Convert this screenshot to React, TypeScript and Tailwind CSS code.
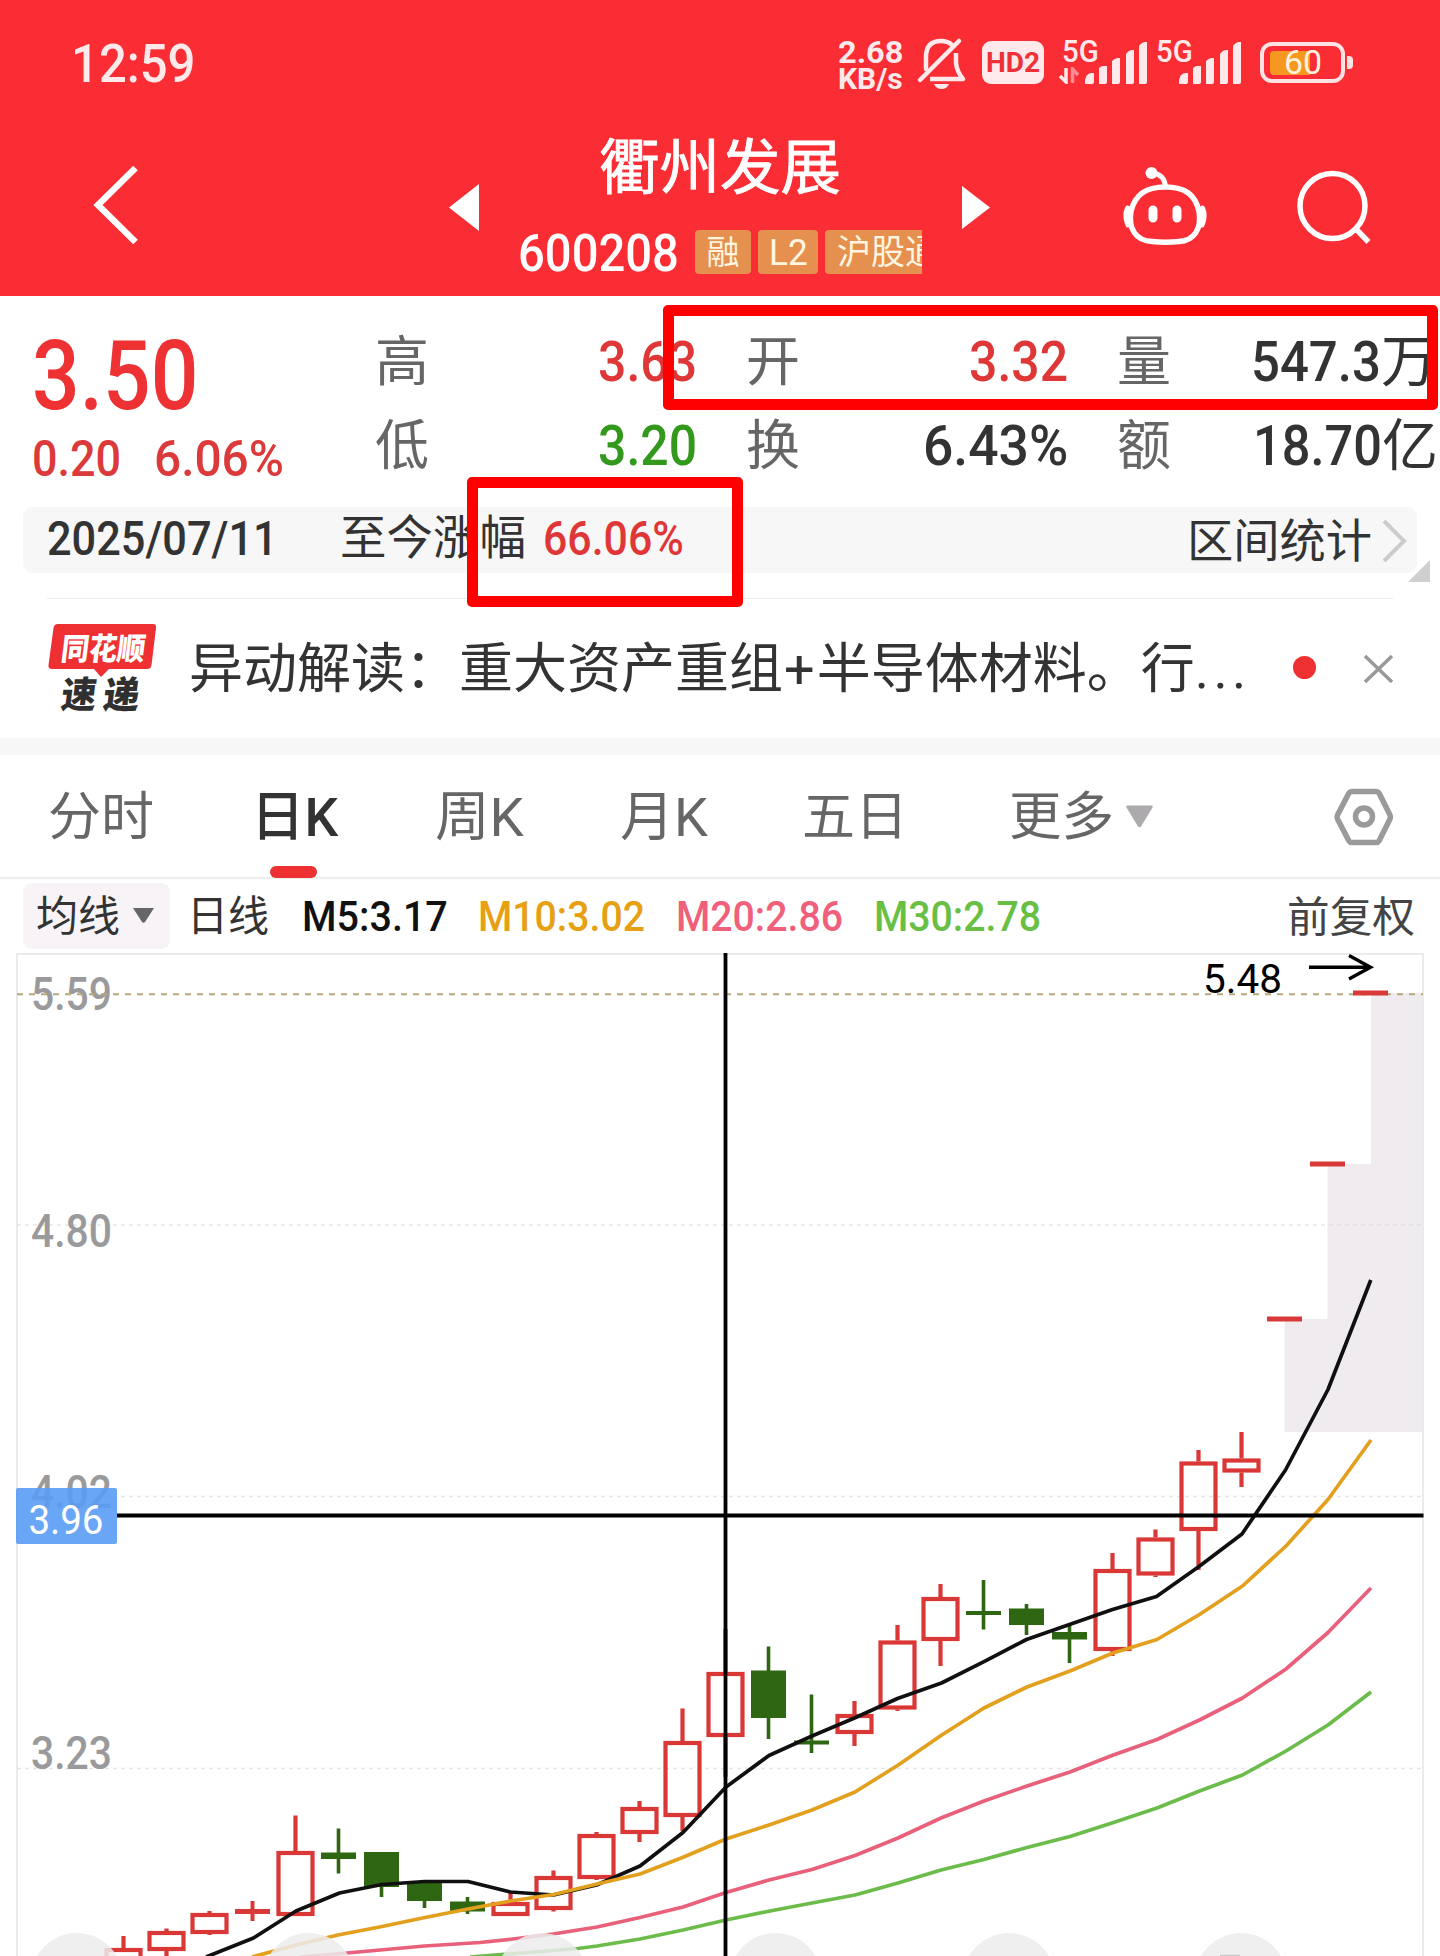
import { useLayoutEffect, useRef } from "react";

const FONT = "font-['Roboto','Noto_Sans_CJK_SC',sans-serif]";

/** Text condensed or stretched horizontally so that it fills its box. */
function Fit({ children, className }: { children: string; className: string }) {
  const outer = useRef<HTMLSpanElement>(null);
  const inner = useRef<HTMLSpanElement>(null);
  useLayoutEffect(() => {
    if (outer.current && inner.current) {
      const ratio = outer.current.clientWidth / inner.current.offsetWidth;
      inner.current.style.transform = `scaleX(${ratio})`;
    }
  }, [children]);
  return (
    <span ref={outer} className={`block shrink-0 leading-none ${className}`}>
      <span ref={inner} className="inline-block origin-left align-top whitespace-nowrap">
        {children}
      </span>
    </span>
  );
}

function Signal() {
  return (
    <svg className="block h-[43px] w-[63px]" viewBox="0 0 63 43" fill="#ffe9ea">
      <path d="M0 43V39Q1 33 6 32H9V41Q9 43 7 43Z" />
      <path d="M14 43V27L17 25H22V41Q22 43 20 43Z" />
      <path d="M27 43V20Q30 17 33 17H35V41Q35 43 33 43Z" />
      <path d="M41 43V13Q44 9 47 9H49V41Q49 43 47 43Z" />
      <path d="M54 43V5Q57 1 60 1H62V41Q62 43 60 43Z" />
    </svg>
  );
}

function StatusBar() {
  return (
    <div className="flex h-[104px] items-start text-[#ffe9ea]">
      <Fit className="mt-[38px] ml-[71px] w-[124px] text-[53px] font-medium">12:59</Fit>
      <div className="mt-[36px] ml-[643px] flex w-[65px] flex-col">
        <Fit className="h-[28px] w-[65px] text-[32px] font-bold">2.68</Fit>
        <Fit className="w-[65px] text-[30px] font-bold">KB/s</Fit>
      </div>
      <svg className="mt-[36px] ml-[13px] h-[54px] w-[52px]" viewBox="916 36 52 54" fill="none" stroke="#ffe9ea" strokeWidth="4.5">
        <path d="M926 69V57Q926 41 941 41Q948 41 952 45" strokeLinecap="round" />
        <path d="M956 53V63Q957 72 963 79H930" strokeLinejoin="round" />
        <path d="M920 80L959 41" strokeLinecap="round" />
        <path d="M934 84H949Q947 89 941.500 89Q936 89 934 84Z" fill="#ffe9ea" stroke="none" />
      </svg>
      <div className="mt-[41px] ml-[14px] flex h-[43px] w-[62px] justify-center rounded-[9px] bg-[#ffe9ea] text-[#ee3038]">
        <Fit className="mt-[8px] w-[54px] text-[28px] font-bold">HD2</Fit>
      </div>
      <div className="ml-[15px] flex h-[90px]">
        <div className="mt-[36px] w-[26px]">
          <Fit className="ml-[3px] w-[37px] text-[31px] font-medium">5G</Fit>
          <svg className="block h-[17px] w-[22px]" viewBox="0 0 22 17" fill="none" strokeWidth="3.500">
            <path d="M7 1V15L1 9" stroke="#ffe9ea" />
            <path d="M13.500 16V2L19 8" stroke="#fd8d92" />
          </svg>
        </div>
        <div className="mt-[41px]">
          <Signal />
        </div>
      </div>
      <div className="ml-[8px] flex h-[90px]">
        <Fit className="mt-[36px] w-[37px] text-[31px] font-medium">5G</Fit>
        <div className="mt-[41px] -ml-[14px]">
          <Signal />
        </div>
      </div>
      <div className="mt-[42px] ml-[18px] flex items-center gap-[2px]">
        <div className="relative flex h-[41px] w-[85px] justify-center rounded-[12px] border-4 border-[#ffe3e4]">
          <div className="absolute top-[5px] left-[6px] h-[24px] w-[40px] rounded-l-[4px] bg-[#f6971f]" />
          <Fit className="relative w-[38px] text-[33px] text-[#fff3dc]">60</Fit>
        </div>
        <div className="h-[13px] w-[6px] rounded-r-[4px] bg-[#ffe3e4]" />
      </div>
    </div>
  );
}

function TitleBar() {
  return (
    <div className="flex h-[192px] items-start">
      <svg className="mt-[58px] ml-[90px] h-[86px] w-[52px]" viewBox="90 162 52 86" fill="none" stroke="#fff" strokeWidth="6.500">
        <path d="M135.500 168L98 205L135.500 242" />
      </svg>
      <svg className="mt-[80px] ml-[307px] h-[47px] w-[30px]" viewBox="0 0 30 47" fill="#fff">
        <path d="M0 23.500L30 0V47Z" />
      </svg>
      <div className="ml-[39px] w-[405px]">
        <Fit className="mt-[35px] ml-[81px] w-[242px] text-[60px] text-white [-webkit-text-stroke:0.8px_white]">衢州发展</Fit>
        <div className="mt-[31px] flex h-[44px] overflow-hidden">
          <Fit className="-mt-[2px] w-[161px] text-[51px] font-medium text-white">600208</Fit>
          <div className="ml-[16px] flex gap-[7px] text-[33px] leading-[45px] text-[#fff5e0]">
            <div className="h-[44px] w-[56px] rounded-[4px] bg-[#e5904e] text-center">融</div>
            <div className="flex h-[44px] w-[60px] justify-center rounded-[4px] bg-[#e5904e]">
              <Fit className="mt-[4px] w-[39px] text-[37px]">L2</Fit>
            </div>
            <div className="w-[97px] overflow-hidden rounded-l-[4px] bg-[#e5904e] pl-[12px] text-[34px] whitespace-nowrap">沪股通</div>
          </div>
        </div>
      </div>
      <svg className="mt-[82px] ml-[39px] h-[43px] w-[28px]" viewBox="0 0 28 43" fill="#fff">
        <path d="M0 0L28 21.500L0 43Z" />
      </svg>
      <svg className="mt-[60px] ml-[130px] h-[84px] w-[92px]" viewBox="1120 164 92 84" fill="none" stroke="#fff" strokeWidth="5.500">
        <circle cx="1151.500" cy="173" r="6" fill="#fff" stroke="none" />
        <path d="M1152 173Q1164 174 1165.500 186" strokeWidth="5" />
        <path d="M1165 187C1186 187 1195 195 1199 211C1202 229 1194 241 1179 241.500Q1165 243 1152 241.500C1136 241 1128 229 1131 211C1135 195 1145 187 1165 187Z" />
        <path d="M1127.500 208Q1124 216 1128 225M1202.500 208Q1206 216 1202 225" strokeWidth="5" strokeLinecap="round" />
        <path d="M1153 210V218M1177 210V218" strokeWidth="9" strokeLinecap="round" />
      </svg>
      <svg className="mt-[60px] ml-[80px] h-[84px] w-[84px]" viewBox="1292 164 84 84" fill="none" stroke="#fff" strokeWidth="5.500">
        <ellipse cx="1332.500" cy="206" rx="32.500" ry="32.500" />
        <path d="M1355 228L1368.500 242" />
      </svg>
    </div>
  );
}

function Label({ children }: { children: string }) {
  return <span className="pl-px text-[54px] leading-[58px] text-[#666]">{children}</span>;
}

function Quote() {
  return (
    <div className="flex h-[211px] items-start text-[56px] text-[#333]">
      <div className="mt-[32px] ml-[32px] w-[342px]">
        <Fit className="w-[166px] text-[96px] font-medium text-[#ee3133]">3.50</Fit>
        <div className="mt-[10px] flex text-[50px] font-medium text-[#dc3a3a]">
          <Fit className="w-[89px]">0.20</Fit>
          <Fit className="ml-[33px] w-[130px]">6.06%</Fit>
        </div>
      </div>
      <div className="mt-[38px] grid auto-rows-[56px] grid-cols-[323px_323px_324px] gap-x-[48px] gap-y-[28px]">
        <div className="flex justify-between">
          <Label>高</Label>
          <Fit className="w-[99px] font-medium text-[#df3737]">3.63</Fit>
        </div>
        <div className="flex justify-between">
          <Label>开</Label>
          <Fit className="w-[99px] font-medium text-[#df3737]">3.32</Fit>
        </div>
        <div className="flex">
          <Label>量</Label>
          <Fit className="ml-[80px] w-[130px] font-medium">547.3</Fit>
          <span className="leading-[56px]">万</span>
        </div>
        <div className="flex justify-between">
          <Label>低</Label>
          <Fit className="w-[99px] font-medium text-[#33991d]">3.20</Fit>
        </div>
        <div className="flex justify-between">
          <Label>换</Label>
          <Fit className="w-[145px] font-medium">6.43%</Fit>
        </div>
        <div className="flex">
          <Label>额</Label>
          <Fit className="ml-[82px] w-[129px] font-medium">18.70</Fit>
          <span className="leading-[56px]">亿</span>
        </div>
      </div>
    </div>
  );
}

function RangeBar() {
  return (
    <div className="relative h-[92px]">
      <div className="mx-[23px] flex h-[66px] items-start rounded-[9px] bg-[#f7f7f7] text-[48px] text-[#333]">
        <Fit className="mt-[8px] ml-[24px] w-[231px] font-medium">2025/07/11</Fit>
        <Fit className="mt-[7px] ml-[62px] w-[186px] text-[47px]">至今涨幅</Fit>
        <Fit className="mt-[8px] ml-[17px] w-[141px] font-medium text-[#df3737]">66.06%</Fit>
        <Fit className="mt-[11px] ml-[503px] w-[185px] text-[46px]">区间统计</Fit>
        <svg className="mt-[10px] ml-[9px] h-[48px] w-[28px]" viewBox="0 0 28 48" fill="none" stroke="#cdcdcd" strokeWidth="4">
          <path d="M3 4L23 24L3 44" />
        </svg>
      </div>
      <svg className="absolute top-[53px] left-[1408px] h-[22px] w-[22px]" viewBox="0 0 22 22" fill="#cfcfcf">
        <path d="M22 0V22H0Z" />
      </svg>
      <div className="mx-[47px] mt-[25px] h-px bg-[#ececec]" />
    </div>
  );
}

function ExpressLogo() {
  return (
    <svg className="mt-[23px] ml-[46px] h-[92px] w-[112px]" viewBox="46 622 112 92">
      <path d="M58 624H153Q156.500 624 156 628L151.500 665Q151 669 147 669H109L101 677L94 669H52Q48 669 48.500 665L53.500 628Q54 624 58 624Z" fill="#ee3032" />
      <g transform="translate(0 660) skewX(-7)" className={FONT} fontWeight="900">
        <text x="60" y="0" fontSize="31" fill="#fff" textLength="84" lengthAdjust="spacingAndGlyphs">同花顺</text>
        <text x="66" y="48.500" fontSize="37" fill="#303030" textLength="35" lengthAdjust="spacingAndGlyphs">速</text>
        <text x="108" y="48.500" fontSize="37" fill="#303030" textLength="36" lengthAdjust="spacingAndGlyphs">递</text>
      </g>
    </svg>
  );
}

function NewsRow() {
  return (
    <div className="flex h-[139px] items-start">
      <ExpressLogo />
      <div className="mt-[44px] ml-[31px] w-[1074px] text-[54px] leading-none whitespace-nowrap text-[#333]">
        异动解读：重大资产重组<span className="mr-[2px] ml-px">+</span>半导体材料。行<span className="tracking-[4.500px]">...</span>
      </div>
      <div className="mt-[57px] ml-[30px] size-[23px] rounded-full bg-[#ee3032]" />
      <svg className="mt-[55px] ml-[47px] h-[30px] w-[31px]" viewBox="0 0 31 30" fill="none" stroke="#999" strokeWidth="3.500">
        <path d="M2 2L29 28M29 2L2 28" />
      </svg>
    </div>
  );
}

function Tabs() {
  return (
    <div className="relative flex h-[124px] items-start border-b-2 border-[#eeeeee] text-[54px] text-[#666]">
      <Fit className="mt-[37px] ml-[48px] w-[106px] text-[52px]">分时</Fit>
      <Fit className="mt-[36px] ml-[97px] w-[87px] font-medium text-[#333]">日K</Fit>
      <Fit className="mt-[36px] ml-[97px] w-[89px]">周K</Fit>
      <Fit className="mt-[36px] ml-[96px] w-[88px]">月K</Fit>
      <Fit className="mt-[37px] ml-[94px] w-[106px] text-[52px]">五日</Fit>
      <Fit className="mt-[37px] ml-[101px] w-[105px] text-[52px]">更多</Fit>
      <svg className="mt-[50px] ml-[12px] h-[23px] w-[27px]" viewBox="0 0 27 22" fill="#acaaac">
        <path d="M1 0H26Q27 0 26.500 2L15 21Q13.500 22.500 12 21L0.500 2Q0 0 1 0Z" />
      </svg>
      <svg className="mt-[32px] ml-[179px] h-[60px] w-[64px]" viewBox="1332 787 64 60" fill="none" stroke="#9a9a9a" strokeWidth="5.500">
        <path d="M1352 791.500H1376Q1378 791.500 1379 793L1390 815Q1391 817 1390 819L1379 841Q1378 842.500 1376 842.500H1352Q1350 842.500 1349 841L1337.500 819Q1336.500 817 1337.500 815L1349 793Q1350 791.500 1352 791.500Z" />
        <circle cx="1364" cy="816.500" r="8.500" />
      </svg>
      <div className="absolute top-[111px] left-[270px] h-[12px] w-[47px] rounded-[6px] bg-[#ee3032]" />
    </div>
  );
}

function Indicators() {
  return (
    <div className="flex h-[71px] items-start text-[42.5px] font-medium">
      <div className="mt-[4px] ml-[23px] flex h-[66px] w-[147px] rounded-[9px] bg-[#f7f3f7] font-normal text-[#333]">
        <Fit className="mt-[13px] ml-[13px] w-[84px] text-[42px]">均线</Fit>
        <svg className="mt-[25px] ml-[12px] h-[15px] w-[23px]" viewBox="0 0 23 15" fill="#666">
          <path d="M1 0H22L13 14Q11.500 15.500 10 14Z" />
        </svg>
      </div>
      <Fit className="mt-[17px] ml-[17px] w-[82px] text-[42px] font-normal text-[#333]">日线</Fit>
      <Fit className="mt-[17px] ml-[33px] w-[146px] text-[#111]">M5:3.17</Fit>
      <Fit className="mt-[17px] ml-[30px] w-[167px] text-[#e6a012]">M10:3.02</Fit>
      <Fit className="mt-[17px] ml-[31px] w-[167px] text-[#f0607a]">M20:2.86</Fit>
      <Fit className="mt-[17px] ml-[31px] w-[167px] text-[#68bf43]">M30:2.78</Fit>
      <Fit className="mt-[18px] ml-[246px] w-[128px] text-[42px] font-normal text-[#444]">前复权</Fit>
    </div>
  );
}

type Candle = { x: number; high: number; low: number; top: number; bottom: number; up: boolean };

const STEP = 43;
const CENTER = 725.5;
const c = (k: number, high: number, low: number, top: number, bottom: number, up = true): Candle => ({
  x: CENTER + k * STEP, high, low, top, bottom, up,
});

const CANDLES: Candle[] = [
  c(-14, 1936, 1990, 1948, 1980),
  c(-13, 1928.5, 1970, 1931, 1951),
  c(-12, 1911, 1935, 1913, 1934),
  c(-11, 1901, 1921, 1909, 1914),
  c(-10, 1815.5, 1915, 1851, 1916),
  c(-9, 1828.5, 1873.5, 1852.5, 1859, false),
  c(-8, 1852, 1897, 1852, 1887, false),
  c(-7, 1882, 1908, 1882, 1901, false),
  c(-6, 1897, 1914, 1901.5, 1911.5, false),
  c(-5, 1893, 1915, 1902, 1916),
  c(-4, 1870.5, 1911.5, 1876, 1910),
  c(-3, 1832, 1880, 1834, 1879),
  c(-2, 1801, 1842, 1807, 1834),
  c(-1, 1708.5, 1831, 1741, 1817),
  c(0, 1629, 1777, 1672, 1737),
  c(1, 1646.5, 1739, 1670.5, 1718, false),
  c(2, 1694.5, 1753, 1740.5, 1744.5, false),
  c(3, 1701, 1746, 1714, 1734),
  c(4, 1625, 1711, 1640.5, 1709.5),
  c(5, 1584, 1666, 1597, 1641),
  c(6, 1580, 1629.5, 1611, 1615, false),
  c(7, 1604, 1635, 1608.5, 1625, false),
  c(8, 1625.5, 1663, 1632, 1639.5, false),
  c(9, 1553, 1656, 1569, 1651),
  c(10, 1529.5, 1577, 1537.5, 1575.5),
  c(11, 1450, 1570, 1461.5, 1531),
  c(12, 1432, 1487, 1458.5, 1472.5),
  c(13, 1319, 1319, 1316.5, 1321.5),
  c(14, 1164, 1164, 1161.5, 1166.5),
  c(15, 993, 993, 990.5, 995.5),
];

const MA5 = "206,1957 253.5,1938 296,1911 339.5,1893 382,1884.5 424.5,1881.5 468,1881.5 510.5,1892 553.5,1895 596.5,1885 640,1866 683,1832.5 726,1787 769,1755.5 812,1736 854.5,1718 897.5,1698.5 941.5,1683 984,1661.7 1026.5,1639.5 1069.5,1624.5 1112.5,1609.5 1156.5,1596.5 1199,1566.5 1242,1534 1285.5,1470 1328,1389.5 1370.8,1280";
const MA10 = "252,1957 296,1945 338,1935 382,1926.5 425,1917.5 468,1909 510.5,1901 553.5,1894.5 597,1884 640,1874 682.5,1857.5 726,1839 769,1825 812,1810 855,1792 897.5,1765.5 941,1735.5 984,1708 1027,1687 1070,1671 1113,1653 1157,1639.5 1199.5,1614.5 1242.5,1586 1286,1546 1328,1499.5 1371,1440";
const MA20 = "300,1957 347,1953 424.5,1946 480,1942.5 513,1939 553,1934 597,1927 640,1917.5 683,1907 726,1892.5 769,1880 812,1869.5 855,1855.5 898,1838 941,1818 984,1801 1027,1786 1070,1772 1112,1755.5 1157,1739.5 1199.5,1720 1242.5,1698 1286,1669 1328,1632.5 1371,1588";
const MA30 = "470,1957 521,1953 578,1948.5 597,1946 640,1939 683,1930 726,1920 770,1911 812,1903 855,1895 898,1883 941,1870 984,1859.5 1027,1847.5 1070,1836.5 1112,1823 1157,1808 1199.5,1791 1242.5,1775 1286,1751 1328,1725 1371,1692";

function CandleMark({ d }: { d: Candle }) {
  const flat = d.bottom - d.top < 7;
  if (!d.up || flat) {
    const color = d.up ? "#d83a39" : "#2f6612";
    return (
      <g fill={color}>
        <rect x={d.x - (d.up ? 2 : 1.8)} y={d.high} width={d.up ? 4 : 3.6} height={d.low - d.high} />
        <rect x={d.x - 17.5} y={d.top} width="35" height={d.bottom - d.top} />
      </g>
    );
  }
  return (
    <g stroke="#da3737" strokeWidth="4.200" fill="none">
      <path d={`M${d.x} ${d.high}V${d.top}M${d.x} ${d.bottom}V${d.low}`} />
      <rect x={d.x - 17} y={d.top + 2} width="34" height={d.bottom - d.top - 4} />
    </g>
  );
}

function Chart() {
  const axis = [
    { label: "5.59", y: 1009.5 },
    { label: "4.80", y: 1247 },
    { label: "4.02", y: 1508 },
    { label: "3.23", y: 1768.5 },
  ];
  return (
    <svg className={`block h-[1006px] w-[1440px] ${FONT}`} viewBox="0 950 1440 1006">
      <path d="M1284.500 1319H1327.500V1164H1371V993H1423V1432H1284.500Z" fill="#efebef" />
      <path d="M17 1970V954H1423V1970" fill="none" stroke="#ebebec" strokeWidth="2" />
      <g stroke="#dcdcde" strokeOpacity="0.75" strokeWidth="1.500" strokeDasharray="4 4">
        <path d="M17 1225H1423M17 1496.500H1423M17 1768.500H1423" />
      </g>
      <g fontSize="46.500" fontWeight="500" fill="#9a9a9c">
        {axis.map((a) => (
          <text key={a.label} x="31" y={a.y} textLength="81" lengthAdjust="spacingAndGlyphs">{a.label}</text>
        ))}
      </g>
      <path d="M17 994.300H1423" stroke="#b9a77c" strokeWidth="2" strokeDasharray="6 6" />

      {CANDLES.map((d) => <CandleMark key={d.x} d={d} />)}

      <g fill="none" strokeWidth="3.700" strokeLinejoin="round">
        <polyline points={MA30} stroke="#6cbc4b" />
        <polyline points={MA20} stroke="#e8607a" />
        <polyline points={MA5} stroke="#101010" />
        <polyline points={MA10} stroke="#e2a01e" />
      </g>

      <g fill="#ececec" fillOpacity="0.85">
        {[77, 309, 542, 775.5, 1009, 1241].map((x) => <circle key={x} cx={x} cy="1979" r="46" />)}
      </g>
      <rect x="1220" y="1954.800" width="20" height="3" fill="#c8c8c8" />

      <path d="M725.500 953V1956" stroke="#000" strokeWidth="3.800" />
      <path d="M117 1515.500H1423.500" stroke="#000" strokeWidth="4" />

      <rect x="16" y="1488" width="101" height="56" rx="2" fill="#5a9cf5" fillOpacity="0.9" />
      <text x="28.500" y="1533.500" fontSize="41" fill="#fff" textLength="75" lengthAdjust="spacingAndGlyphs">3.96</text>

      <text x="1203" y="993" fontSize="41" fill="#000" textLength="79" lengthAdjust="spacingAndGlyphs">5.48</text>
      <path d="M1309 967.300H1370M1349 955.500L1370.500 967.300L1349 979" fill="none" stroke="#000" strokeWidth="3.400" />
    </svg>
  );
}

export default function App() {
  return (
    <main className={`relative h-[1956px] w-[1440px] overflow-hidden bg-white ${FONT}`}>
      <header className="h-[296px] bg-[#f92d33]">
        <StatusBar />
        <TitleBar />
      </header>
      <Quote />
      <RangeBar />
      <NewsRow />
      <div className="h-[17px] bg-[#f7f7f7]" />
      <div className="flex flex-col">
        <Tabs />
        <Indicators />
      </div>
      <Chart />
      <div className="absolute top-[305px] left-[663px] h-[105px] w-[775px] rounded-[5px] border-[11px] border-[#ff0000]" />
      <div className="absolute top-[477px] left-[467px] h-[130px] w-[276px] rounded-[5px] border-[11.500px] border-[#ff0000]" />
    </main>
  );
}
